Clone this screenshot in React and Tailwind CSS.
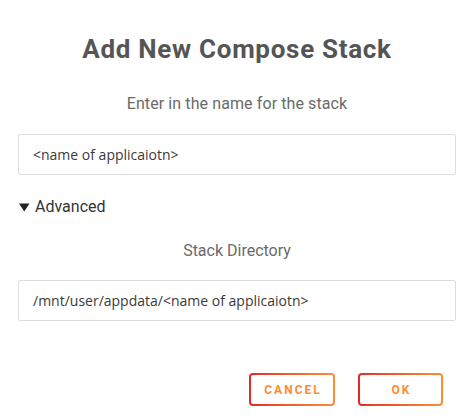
export default function App() {
  const label = { fontFamily: "Roboto, 'Liberation Sans', sans-serif" };
  const field = { fontFamily: "'Open Sans', 'Liberation Sans', sans-serif" };

  return (
    <div className="w-[466px] h-[420px] bg-white overflow-hidden" style={label}>
      <div className="pl-[18px] pr-[10px] flex flex-col">
        <h2 className="mt-[34px] h-[30px] leading-[30px] text-center text-[26px] font-bold tracking-[0.7px] text-[#555555]">
          Add New Compose Stack
        </h2>

        <p className="mt-[30px] h-[20px] leading-[20px] text-center text-[16px] tracking-[0.1px] text-[#6a6a6a]">
          Enter in the name for the stack
        </p>

        <div
          className="mt-[20px] h-[41px] border border-[#dddddd] rounded-[2px] px-[14px] flex items-center text-[14px] text-[#3a3a3a]"
          style={field}
        >
          &lt;name of applicaiotn&gt;
        </div>

        <div className="mt-[22px] h-[20px] flex items-center gap-[5px] text-[16px] leading-[20px] text-[#333333]">
          <svg width="11" height="9" viewBox="0 0 11 9" className="ml-[1px]">
            <path d="M0 0.5 H10.5 L5.25 8.5 Z" fill="#222222" />
          </svg>
          <span>Advanced</span>
        </div>

        <p className="mt-[24px] h-[20px] leading-[20px] text-center text-[16px] text-[#6a6a6a]">
          Stack Directory
        </p>

        <div
          className="mt-[19px] h-[41px] border border-[#dddddd] rounded-[2px] px-[14px] flex items-center text-[14px] text-[#3a3a3a]"
          style={field}
        >
          /mnt/user/appdata/&lt;name of applicaiotn&gt;
        </div>
      </div>

      <div className="mt-[52px] pr-[23px] flex justify-end gap-[23px]">
        <button className="w-[86px] h-[33px] p-[2px] rounded-[4px] bg-gradient-to-r from-[#e22828] to-[#ff8c2f]">
          <span className="w-full h-full rounded-[2px] bg-white flex items-center justify-center text-[12px] font-bold tracking-[2px] text-[#ff8c2f] pl-[2px]">
            CANCEL
          </span>
        </button>
        <button className="w-[85px] h-[33px] p-[2px] rounded-[4px] bg-gradient-to-r from-[#e22828] to-[#ff8c2f]">
          <span className="w-full h-full rounded-[2px] bg-white flex items-center justify-center text-[12px] font-bold tracking-[2px] text-[#ff8c2f] pl-[2px]">
            OK
          </span>
        </button>
      </div>
    </div>
  );
}
